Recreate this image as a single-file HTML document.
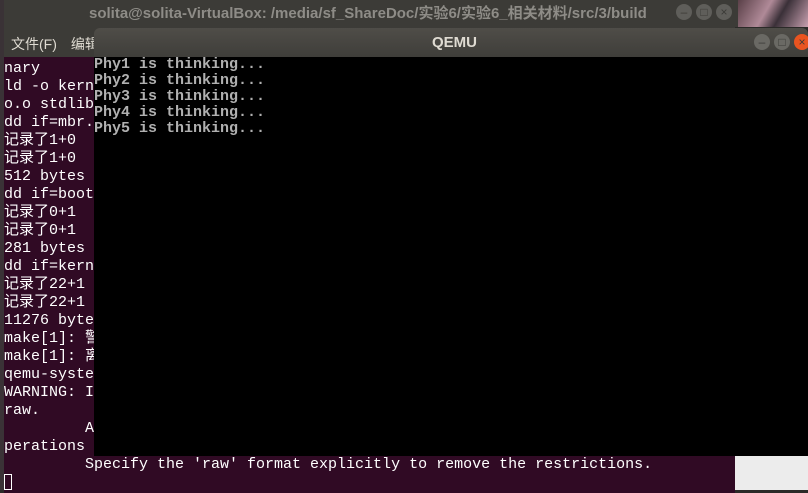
<!DOCTYPE html><html><head><meta charset="utf-8"><style>
body{margin:0;width:808px;height:490px;overflow:hidden;position:relative;background:#2b2a28;font-family:"Liberation Sans","Noto Sans CJK SC",sans-serif}
.abs{position:absolute}
#wall{left:738px;top:0;width:70px;height:27px;background:linear-gradient(120deg,#5a4048,#b08a98 40%,#3a3038 60%,#c8a0b0)}
#ttl{left:4px;top:0;width:734px;height:27px;background:#3c3b37;color:#8e8c87;font-size:15px;font-weight:bold;line-height:27px}
#menu{left:4px;top:27px;width:731px;height:30px;background:#3c3b37;color:#dfdbd2;font-size:14px;line-height:34px}
#term{left:4px;top:57px;width:731px;height:433px;background:#300a24;color:#fff;font-family:"Liberation Mono","Noto Sans CJK SC",monospace;font-size:15px;line-height:18px;white-space:pre}
#right{left:735px;top:380px;width:73px;height:110px;background:#ececec}
#q{left:94px;top:28px;width:714px;height:29px;background:linear-gradient(#4f4d48,#3f3e3a);border-radius:6px 6px 0 0}
#qc{left:94px;top:57px;width:714px;height:399px;background:#000;color:#b0b0b0;font-family:"Liberation Mono",monospace;font-size:15px;line-height:16px;white-space:pre;font-weight:bold}
.b{position:absolute;width:16px;height:16px;border-radius:50%;background:#5f5e5a;color:#3c3b37;font-size:12px;text-align:center;line-height:16px}
</style></head><body>
<div class="abs" style="left:0;top:0;width:4px;height:490px;background:#3a3236"></div>
<div id="wall" class="abs"></div>
<div id="ttl" class="abs"><span style="margin-left:85px">solita@solita-VirtualBox: /media/sf_ShareDoc/实验6/实验6_相关材料/src/3/build</span></div>
<div class="b" style="left:676px;top:4px">–</div><div class="b" style="left:696px;top:4px">□</div><div class="b" style="left:716px;top:4px">×</div>
<div id="menu" class="abs"><span style="margin-left:7px">文件(F)</span><span style="margin-left:14px">编辑</span></div>
<div id="term" class="abs" style="padding-top:3px">nary
ld -o kern
o.o stdlib
dd if=mbr.
记录了1+0
记录了1+0
512 bytes
dd if=boot
记录了0+1
记录了0+1
281 bytes
dd if=kern
记录了22+1
记录了22+1
11276 byte
make[1]: 警
make[1]: 离
qemu-syste
WARNING: I
raw.
         A
perations
         Specify the 'raw' format explicitly to remove the restrictions.
<span style="display:inline-block;width:8px;height:16px;border:1px solid #fff;box-sizing:border-box;vertical-align:middle"></span></div>
<div id="right" class="abs"></div>
<div id="q" class="abs"><div style="position:absolute;left:338px;top:0;line-height:29px;color:#dfdbd2;font-weight:bold;font-size:15px">QEMU</div></div>
<div class="b" style="left:754px;top:34px;background:#6a6964;color:#3c3b37">–</div>
<div class="b" style="left:774px;top:34px;background:#6a6964;color:#3c3b37">□</div>
<div class="b" style="left:794px;top:34px;background:#e95420;color:#3c3b37">×</div>
<div id="qc" class="abs">Phy1 is thinking...
Phy2 is thinking...
Phy3 is thinking...
Phy4 is thinking...
Phy5 is thinking...</div>
</body></html>
